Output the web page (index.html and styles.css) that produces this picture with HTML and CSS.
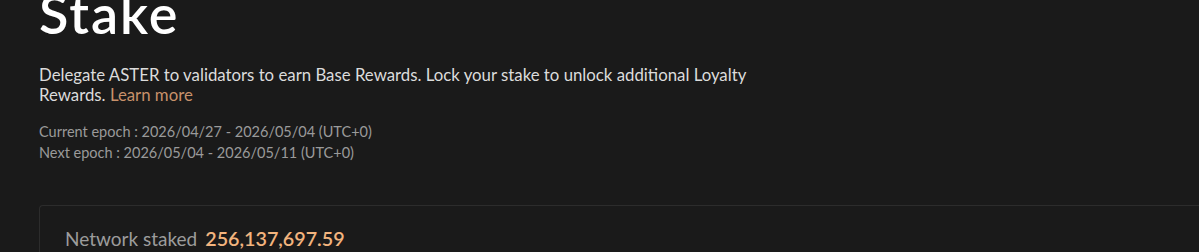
FILE: index.html
```html
<!DOCTYPE HTML>
<html lang=en>
	<head>
		<meta charset=utf-8>
		<meta name=viewport content="width=device-width, initial-scale=1.0">
		<title>Stake</title>
		<link rel="stylesheet" href="styles.css">
	</head>
	<body>
		<div class=container>
			<h1 class=title>Stake</h1>
			<p class=intro>
				Delegate ASTER to validators to earn Base Rewards. Lock your stake to unlock additional Loyalty
				Rewards. <a class=learnMore href=#>Learn more</a>
			</p>
			<div class=epochs>
				<p>Current epoch : 2026/04/27 - 2026/05/04 (UTC+0)</p>
				<p>Next epoch : 2026/05/04 - 2026/05/11 (UTC+0)</p>
			</div>
			<div class=card>
				<div class=stat>
					<span class=statLabel>Network staked</span>
					<span class=statValue>256,137,697.59</span>
				</div>
			</div>
		</div>
	</body>
</html>
```

FILE: styles.css
```css
html, body {
	margin: 0;
	padding: 0;
	background-color: #1a1a1a;
	font-family: Lato, "Noto Sans", sans-serif;
	overflow: hidden;
}

.container {
	padding-left: 39px;
	margin-top: -17px;
}

.title {
	margin: 0;
	font-size: 54px;
	font-weight: 600;
	letter-spacing: 2px;
	line-height: 62px;
	color: #ffffff;
}

.intro {
	margin: 20px 0 0 0;
	max-width: 760px;
	font-size: 16.8px;
	line-height: 20px;
	color: #dcdcdc;
}

.learnMore {
	color: #c8916a;
	text-decoration: none;
}

.epochs {
	margin-top: 16px;
}

.epochs p {
	margin: 0;
	font-size: 14.5px;
	line-height: 21px;
	color: #9a9a9a;
}

.card {
	margin-top: 42px;
	border: 1px solid #2c2c2c;
	border-right: none;
	border-radius: 4px 0 0 0;
	padding: 21px 25px;
}

.stat {
	display: flex;
	align-items: baseline;
	gap: 8px;
}

.statLabel {
	font-size: 19px;
	color: #9c9c9c;
}

.statValue {
	font-size: 19.7px;
	font-weight: 600;
	color: #f2b47e;
}
```
